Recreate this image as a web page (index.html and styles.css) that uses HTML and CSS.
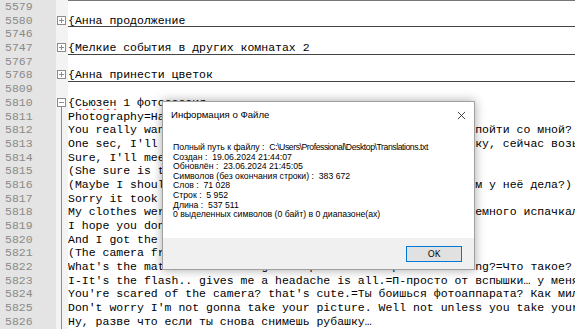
FILE: index.html
```html
<!DOCTYPE html>
<html lang="ru">
<head>
  <meta charset="UTF-8" />
  <title>Translations.txt</title>
  <link rel="stylesheet" href="styles.css">
</head>
<body>
  <div class="editor">
    <div class="line top"><span class="num">5579</span><span class="fold"></span><span class="txt"></span></div>
    <div class="line folded"><span class="num">5580</span><span class="fold"><svg class="box" viewBox="0 0 9 9"><rect x="0.5" y="0.5" width="8" height="8"/><path d="M2 4.5h5M4.5 2v5"/></svg></span><span class="txt">{Анна продолжение</span></div>
    <div class="line"><span class="num">5746</span><span class="fold"></span><span class="txt"></span></div>
    <div class="line folded"><span class="num">5747</span><span class="fold"><svg class="box" viewBox="0 0 9 9"><rect x="0.5" y="0.5" width="8" height="8"/><path d="M2 4.5h5M4.5 2v5"/></svg></span><span class="txt">{Мелкие события в других комнатах 2</span></div>
    <div class="line"><span class="num">5767</span><span class="fold"></span><span class="txt"></span></div>
    <div class="line folded"><span class="num">5768</span><span class="fold"><svg class="box" viewBox="0 0 9 9"><rect x="0.5" y="0.5" width="8" height="8"/><path d="M2 4.5h5M4.5 2v5"/></svg></span><span class="txt">{Анна принести цветок</span></div>
    <div class="line"><span class="num">5809</span><span class="fold"></span><span class="txt"></span></div>
    <div class="line open"><span class="num">5810</span><span class="fold"><svg class="box" viewBox="0 0 9 9"><rect x="0.5" y="0.5" width="8" height="8"/><path d="M2 4.5h5"/></svg></span><span class="txt">{<span class="typo">Сьюзен</span> 1 фотосессия</span></div>
    <div class="line body"><span class="num">5811</span><span class="fold"></span><span class="txt">Photography=Наша фотосессия</span></div>
    <div class="line body"><span class="num">5812</span><span class="fold"></span><span class="txt">You really want to go somewhere with me?=Ты реально хочешь пойти со мной?</span></div>
    <div class="line body"><span class="num">5813</span><span class="fold"></span><span class="txt">One sec, I'll go get my camera and I'll be right back=Минутку, сейчас возьму камеру.</span></div>
    <div class="line body"><span class="num">5814</span><span class="fold"></span><span class="txt">Sure, I'll meet you outside.=Конечно, встретимся снаружи.</span></div>
    <div class="line body"><span class="num">5815</span><span class="fold"></span><span class="txt">(She sure is taking her time.)=(Она явно не торопится.)</span></div>
    <div class="line body"><span class="num">5816</span><span class="fold"></span><span class="txt">(Maybe I should ask her how she's doing.)=(Спросить, как там у неё дела?)</span></div>
    <div class="line body"><span class="num">5817</span><span class="fold"></span><span class="txt">Sorry it took so long.=Прости, что так долго.</span></div>
    <div class="line body"><span class="num">5818</span><span class="fold"></span><span class="txt">My clothes were dirty so I had to change.=Моя одежда была немного испачкалась.</span></div>
    <div class="line body"><span class="num">5819</span><span class="fold"></span><span class="txt">I hope you don't mind.=Надеюсь, ты не против.</span></div>
    <div class="line body"><span class="num">5820</span><span class="fold"></span><span class="txt">And I got the camera.=И я взяла фотоаппарат.</span></div>
    <div class="line body"><span class="num">5821</span><span class="fold"></span><span class="txt">(The camera from the drawer.)=(Фотоаппарат из ящика.)</span></div>
    <div class="line body"><span class="num">5822</span><span class="fold"></span><span class="txt">What's the matter? Did I forget to put on makeup or something?=Что такое?</span></div>
    <div class="line body"><span class="num">5823</span><span class="fold"></span><span class="txt">I-It's the flash.. gives me a headache is all.=П-просто от вспышки… у меня болит голова.</span></div>
    <div class="line body"><span class="num">5824</span><span class="fold"></span><span class="txt">You're scared of the camera? that's cute.=Ты боишься фотоаппарата? Как мило.</span></div>
    <div class="line body"><span class="num">5825</span><span class="fold"></span><span class="txt">Don't worry I'm not gonna take your picture. Well not unless you take your shirt off again.=Не волнуйся, я не буду тебя фотографировать.</span></div>
    <div class="line body"><span class="num">5826</span><span class="fold"></span><span class="txt">Ну, разве что если ты снова снимешь рубашку…</span></div>
  </div>

  <div class="dialog">
    <div class="dlg-title">
      <span>Информация о Файле</span>
      <svg class="close" viewBox="0 0 10 10"><path d="M1 1L9 9M9 1L1 9"/></svg>
    </div>
    <div class="dlg-body">
      <p>Полный путь к файлу :  <span class="path">C:\Users\Professional\Desktop\Translations.txt</span></p>
      <p>Создан :  19.06.2024 21:44:07</p>
      <p>Обновлён :  23.06.2024 21:45:05</p>
      <p>Символов (без окончания строки) :  383 672</p>
      <p>Слов :  71 028</p>
      <p>Строк :  5 952</p>
      <p>Длина :  537 511</p>
      <p>0 выделенных символов (0 байт) в 0 диапазоне(ах)</p>
    </div>
    <div class="dlg-foot">
      <button class="ok">OK</button>
    </div>
  </div>
</body>
</html>
```

FILE: styles.css
```css
body {
  margin: 0;
  background: #fff;
  overflow: hidden;
}

.editor {
  width: 575px;
  height: 331px;
  overflow: hidden;
  font-family: "Liberation Mono", monospace;
  font-size: 11.5px;
}

.line {
  display: grid;
  grid-template-columns: 56px 12px 1fr;
  height: 13.7px;
  line-height: 13.7px;
  white-space: pre;
}

.num {
  background: #e4e4e4;
  color: #8a8a8a;
  padding-left: 5px;
}

.fold {
  background: #f3f3f3;
  position: relative;
}

.txt {
  color: #000;
  overflow: hidden;
}

.line.top .txt {
  border-top: 1px solid #777;
}

.line.folded .txt {
  border-bottom: 1px solid #444;
}

.box {
  position: absolute;
  left: 1px;
  top: 2px;
  width: 9px;
  height: 9px;
  fill: #fff;
  stroke: #8c8c8c;
  stroke-width: 1;
}

.line.open .fold::after {
  content: "";
  position: absolute;
  left: 5px;
  top: 11px;
  bottom: 0;
  border-left: 1px solid #8c8c8c;
}

.line.body .fold::after {
  content: "";
  position: absolute;
  left: 5px;
  top: 0;
  bottom: 0;
  border-left: 1px solid #8c8c8c;
}

.typo {
  text-decoration: underline wavy #e22;
  text-decoration-thickness: 1px;
  text-underline-offset: 2px;
}

.dialog {
  position: absolute;
  left: 162px;
  top: 101px;
  width: 313px;
  height: 169px;
  background: #fff;
  border: 1px solid #a0a0a0;
  box-sizing: border-box;
  box-shadow: 0 0 10px rgba(0, 0, 0, 0.35);
  display: flex;
  flex-direction: column;
  font-family: "Liberation Sans", sans-serif;
  color: #000;
}

.dlg-title {
  height: 41px;
  display: flex;
  justify-content: space-between;
  align-items: flex-start;
  padding: 6px 8px 0 8px;
  box-sizing: border-box;
  font-size: 9.6px;
  line-height: 14px;
}

.close {
  width: 9px;
  height: 9px;
  margin-top: 3px;
  stroke: #333;
  stroke-width: 1;
}

.dlg-body {
  flex: 1;
  padding-left: 10px;
  font-size: 8.7px;
  line-height: 9.6px;
}

.dlg-body p {
  margin: 0;
  white-space: pre;
}

.path {
  letter-spacing: -0.45px;
}

.dlg-foot {
  height: 31px;
  background: #f0f0f0;
  display: flex;
  justify-content: flex-end;
  align-items: center;
  padding-right: 12px;
}

.ok {
  width: 56px;
  height: 16px;
  padding: 0;
  background: #e1e1e1;
  border: 1px solid #0078d7;
  font-family: "Noto Sans", sans-serif;
  font-size: 9px;
  color: #000;
}
```
